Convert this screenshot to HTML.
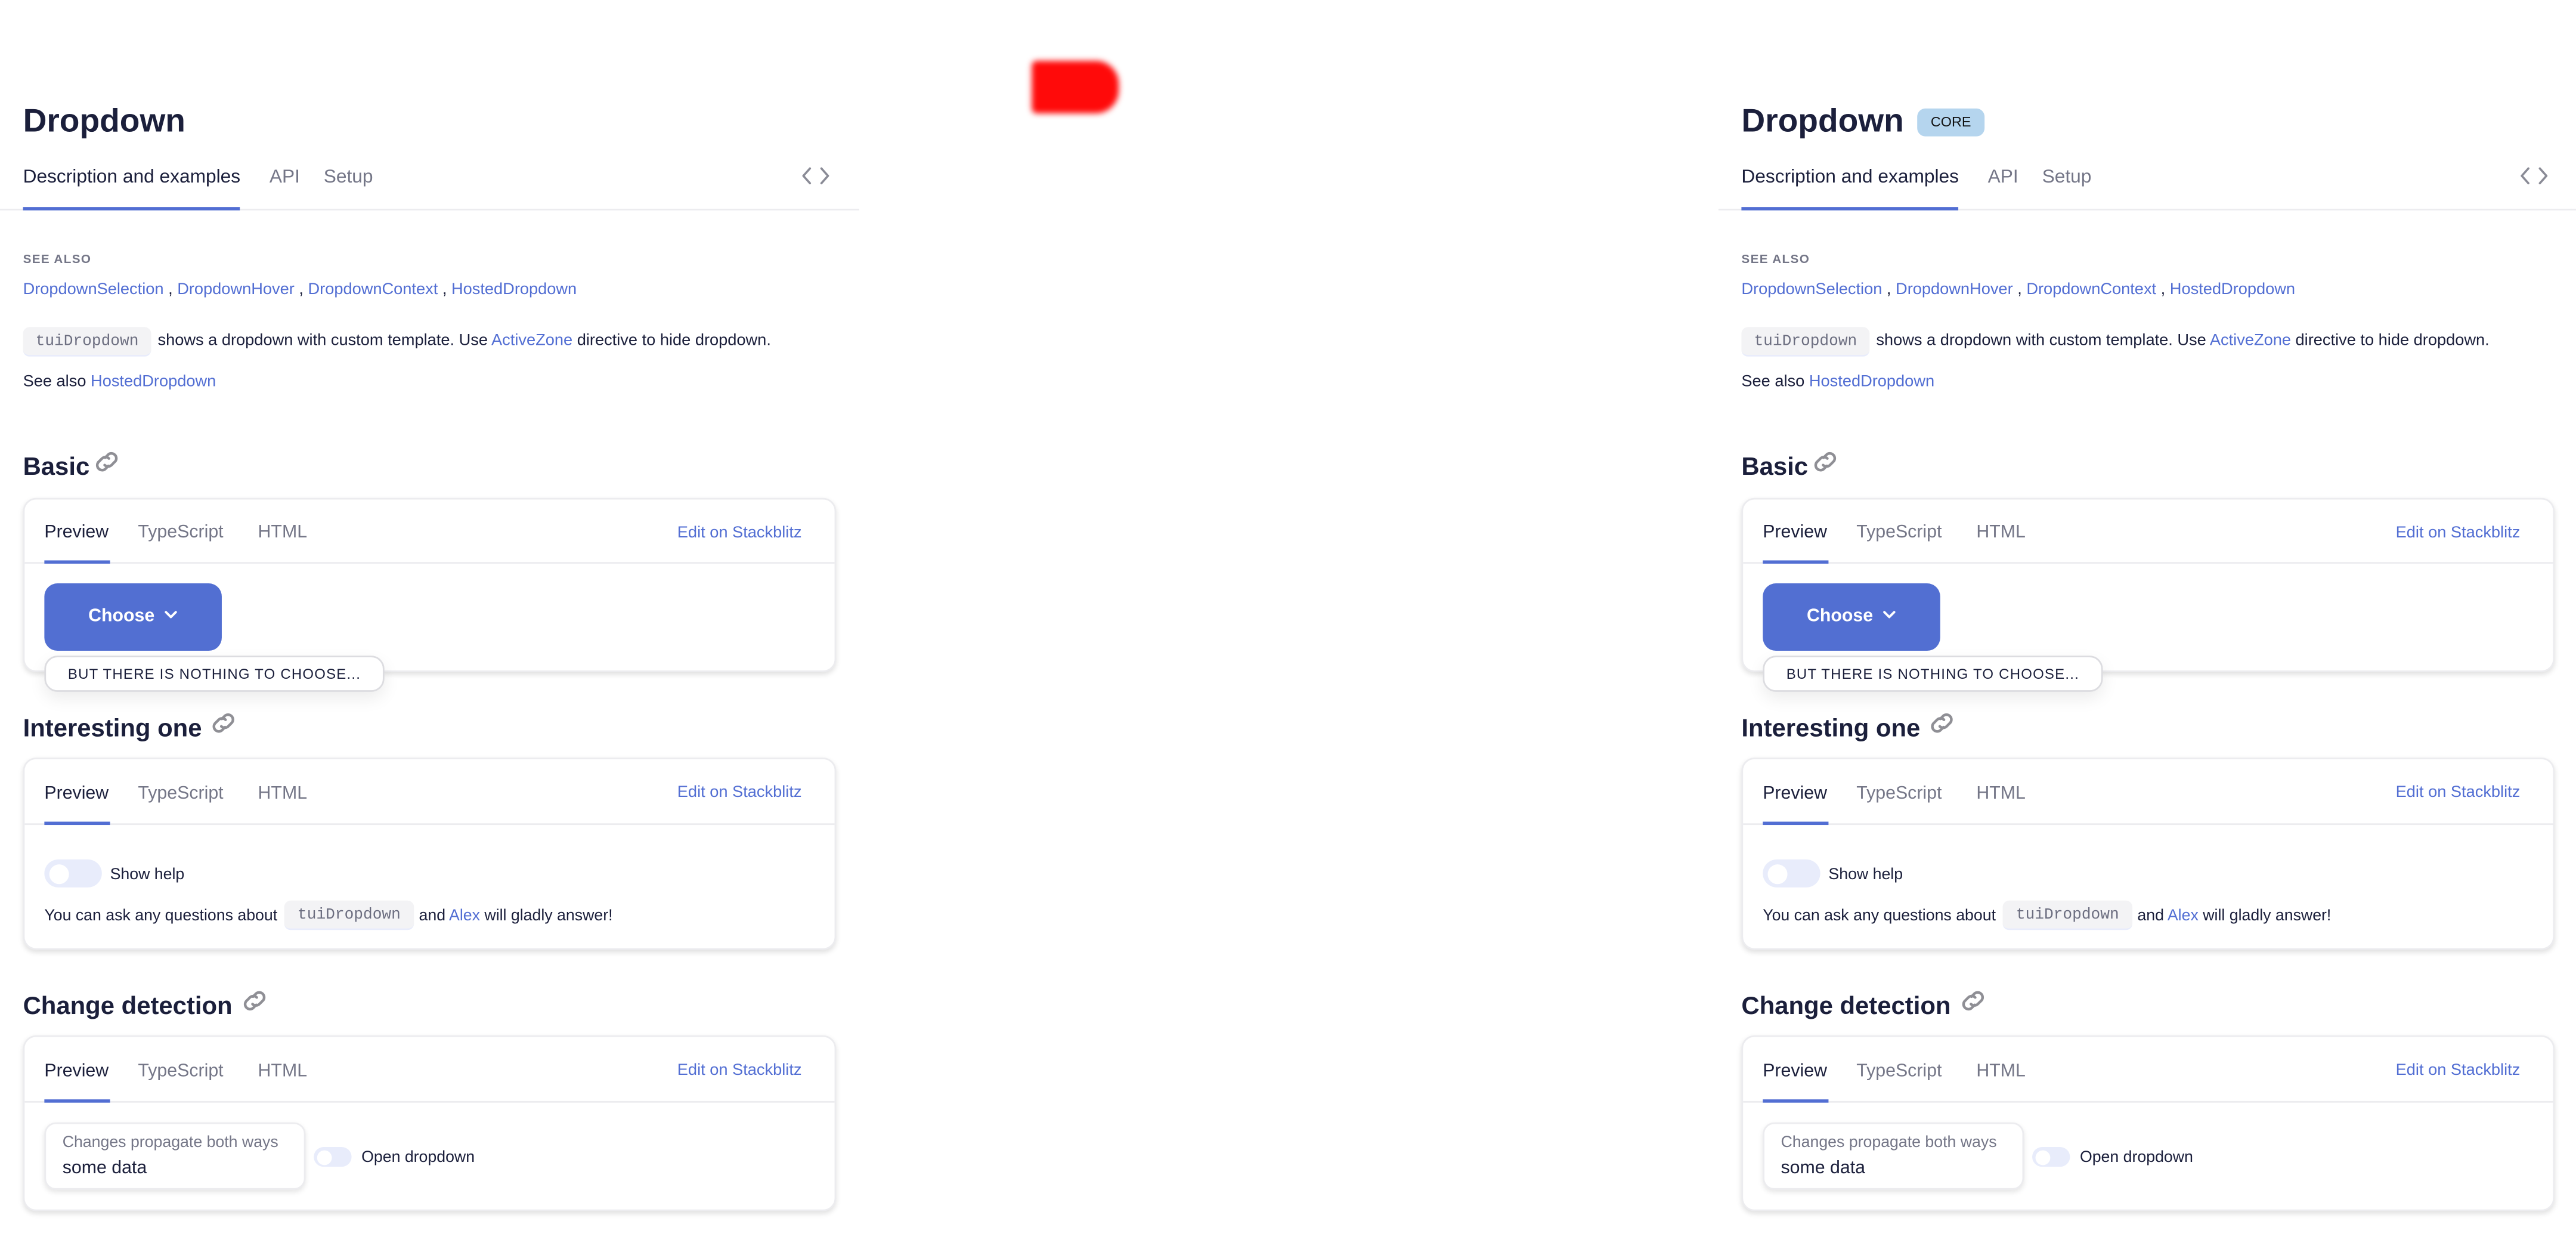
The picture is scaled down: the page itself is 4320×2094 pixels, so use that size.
<!DOCTYPE html>
<html><head><meta charset="utf-8"><style>
html,body{margin:0;padding:0;background:#fff;width:4320px;height:2092px;overflow:hidden}
#s{position:absolute;left:0;top:0;width:1568px;height:760px;transform:scale(2.7551);transform-origin:0 0;font-family:"Liberation Sans",sans-serif;color:#1b1f3b}
.p{position:absolute;top:0;width:523px;height:760px}
.a{position:absolute;white-space:nowrap}
.t{line-height:14px;margin-top:1px}
.b{font-size:9.9px;margin-top:2px}
.blue{color:#526ed3}
.gray{color:#747687}
.code{position:absolute;background:#f3f3f5;border-radius:4px;border-bottom:1px solid #e8ecfb;font-family:"Liberation Mono",monospace;font-size:9.5px;color:#6c6e80;line-height:17px;text-align:center}
.card{position:absolute;left:14px;width:493px;border:1px solid #ececef;border-radius:8px;background:#fff;box-shadow:0 1.5px 3px rgba(0,0,0,.12)}
.card .a{font-size:11px}
.edit{right:20px;left:auto!important}
.sep{position:absolute;left:0;right:0;height:1px;background:#ececef}
.ul{position:absolute;height:2px;background:#526ed3}
.h2{font-size:15.2px;font-weight:bold;margin-top:1px}
.tog{position:absolute;background:#e8ecfb;border-radius:10px}
.tog i{position:absolute;background:#fff;border-radius:50%}
</style></head><body><div id="s">

<div style="position:absolute;left:628px;top:37px;width:53px;height:32px;background:#ff0a0a;border-radius:3px 14px 14px 3px;filter:blur(1.8px)"></div>

<div class="p" style="left:0">
  <div class="a" style="left:14px;top:61px;font-size:20px;font-weight:bold;line-height:26px">Dropdown</div>
  <div class="a t" style="left:14px;top:100px;font-size:11.5px">Description and examples</div>
  <div class="a t gray" style="left:164px;top:100px;font-size:11.5px">API</div>
  <div class="a t gray" style="left:197px;top:100px;font-size:11.5px">Setup</div>
  <svg class="a" style="left:487px;top:101px" width="19" height="12" viewBox="0 0 19 12"><path d="M6 1.5L2 6l4 4.5M13 1.5L17 6l-4 4.5" fill="none" stroke="#8a8b96" stroke-width="1.3" stroke-linecap="round" stroke-linejoin="round"/></svg>
  <div class="a" style="left:0;top:127px;width:523px;height:1px;background:#ececef"></div>
  <div class="a" style="left:14px;top:125.5px;width:132px;height:2px;background:#526ed3"></div>

  <div class="a gray" style="left:14px;top:153px;font-size:7.5px;font-weight:bold;letter-spacing:.5px;line-height:9px">SEE ALSO</div>
  <div class="a t b" style="left:14px;top:168px"><span class="blue">DropdownSelection</span> , <span class="blue">DropdownHover</span> , <span class="blue">DropdownContext</span> , <span class="blue">HostedDropdown</span></div>
  <div class="code" style="left:14px;top:199px;width:78px">tuiDropdown</div>
  <div class="a t b" style="left:96px;top:199px">shows a dropdown with custom template. Use <span class="blue">ActiveZone</span> directive to hide dropdown.</div>
  <div class="a t b" style="left:14px;top:224px">See also <span class="blue">HostedDropdown</span></div>

  <div class="a h2" style="left:14px;top:275px;line-height:18px">Basic</div>
  <svg class="a" style="left:56px;top:272px" width="18" height="18" viewBox="0 0 18 18"><g fill="none" stroke="#8f8f95" stroke-width="1.6" stroke-linecap="round"><path d="M8 6.5l2-2a3 3 0 0 1 4.2 4.2l-2.3 2.3a3 3 0 0 1-4.2 0"/><path d="M10 11.5l-2 2a3 3 0 0 1-4.2-4.2l2.3-2.3a3 3 0 0 1 4.2 0"/></g></svg>

  <div class="card" style="top:303px;height:104px">
    <div class="a t" style="left:12px;top:12px">Preview</div>
    <div class="a t gray" style="left:69px;top:12px">TypeScript</div>
    <div class="a t gray" style="left:142px;top:12px">HTML</div>
    <div class="a t blue edit" style="top:13px;font-size:9.9px!important">Edit on Stackblitz</div>
    <div class="sep" style="top:38px"></div>
    <div class="ul" style="left:12px;top:37px;width:40px"></div>
    <div class="a" style="left:12px;top:51px;width:108px;height:41px;background:#526fd2;border-radius:8px;color:#fff;font-weight:bold;font-size:11px;line-height:41px;text-align:center">Choose&nbsp;&nbsp;<svg width="8" height="6" viewBox="0 0 8 6" style="vertical-align:1px"><path d="M1 1.5l3 3 3-3" fill="none" stroke="#fff" stroke-width="1.4" stroke-linecap="round" stroke-linejoin="round"/></svg></div>
  </div>
  <div class="a" style="left:27px;top:399px;width:205px;height:20px;border:1px solid #dcdce0;border-radius:8px;background:#fff;box-shadow:0 4px 10px rgba(0,0,0,.08);font-size:8.7px;letter-spacing:.45px;line-height:20px;text-align:center">BUT THERE IS NOTHING TO CHOOSE...</div>

  <div class="a h2" style="left:14px;top:434px;line-height:18px">Interesting one</div>
  <svg class="a" style="left:127px;top:431px" width="18" height="18" viewBox="0 0 18 18"><g fill="none" stroke="#8f8f95" stroke-width="1.6" stroke-linecap="round"><path d="M8 6.5l2-2a3 3 0 0 1 4.2 4.2l-2.3 2.3a3 3 0 0 1-4.2 0"/><path d="M10 11.5l-2 2a3 3 0 0 1-4.2-4.2l2.3-2.3a3 3 0 0 1 4.2 0"/></g></svg>

  <div class="card" style="top:461px;height:115px">
    <div class="a t" style="left:12px;top:13px">Preview</div>
    <div class="a t gray" style="left:69px;top:13px">TypeScript</div>
    <div class="a t gray" style="left:142px;top:13px">HTML</div>
    <div class="a t blue edit" style="top:13px;font-size:9.9px!important">Edit on Stackblitz</div>
    <div class="sep" style="top:39px"></div>
    <div class="ul" style="left:12px;top:38px;width:40px"></div>
    <div class="tog" style="left:12px;top:61px;width:35px;height:17px"><i style="left:2.5px;top:2.5px;width:12px;height:12px"></i></div>
    <div class="a t" style="left:52px;top:63px;font-size:9.7px!important">Show help</div>
    <div class="code" style="left:158px;top:86px;width:79px">tuiDropdown</div>
    <div class="a t" style="left:12px;top:88px;font-size:9.7px!important">You can ask any questions about</div>
    <div class="a t" style="left:240px;top:88px;font-size:9.7px!important">and <span class="blue">Alex</span> will gladly answer!</div>
  </div>

  <div class="a h2" style="left:14px;top:603px;line-height:18px">Change detection</div>
  <svg class="a" style="left:146px;top:600px" width="18" height="18" viewBox="0 0 18 18"><g fill="none" stroke="#8f8f95" stroke-width="1.6" stroke-linecap="round"><path d="M8 6.5l2-2a3 3 0 0 1 4.2 4.2l-2.3 2.3a3 3 0 0 1-4.2 0"/><path d="M10 11.5l-2 2a3 3 0 0 1-4.2-4.2l2.3-2.3a3 3 0 0 1 4.2 0"/></g></svg>

  <div class="card" style="top:630px;height:105px">
    <div class="a t" style="left:12px;top:13px">Preview</div>
    <div class="a t gray" style="left:69px;top:13px">TypeScript</div>
    <div class="a t gray" style="left:142px;top:13px">HTML</div>
    <div class="a t blue edit" style="top:13px;font-size:9.9px!important">Edit on Stackblitz</div>
    <div class="sep" style="top:39px"></div>
    <div class="ul" style="left:12px;top:38px;width:40px"></div>
    <div class="a" style="left:12px;top:52px;width:157px;height:39px;border:1px solid #ececef;border-radius:7px;background:#fff;box-shadow:0 1.5px 3px rgba(0,0,0,.1)"></div>
    <div class="a gray" style="left:23px;top:59px;font-size:9.7px!important;line-height:12px">Changes propagate both ways</div>
    <div class="a" style="left:23px;top:73px;font-size:11px;line-height:14px">some data</div>
    <div class="tog" style="left:176px;top:67px;width:23px;height:12px"><i style="left:1.5px;top:1.5px;width:9px;height:9px"></i></div>
    <div class="a t" style="left:205px;top:66px;font-size:9.7px!important">Open dropdown</div>
  </div>
</div>

<div class="p" style="left:1046px">
  <div class="a" style="left:14px;top:61px;font-size:20px;font-weight:bold;line-height:26px">Dropdown</div>
  <div class="a" style="left:121px;top:66px;width:41px;height:17px;background:#b5d5ee;border-radius:5px;font-size:8.5px;line-height:17px;text-align:center;color:#111">CORE</div>
  <div class="a t" style="left:14px;top:100px;font-size:11.5px">Description and examples</div>
  <div class="a t gray" style="left:164px;top:100px;font-size:11.5px">API</div>
  <div class="a t gray" style="left:197px;top:100px;font-size:11.5px">Setup</div>
  <svg class="a" style="left:487px;top:101px" width="19" height="12" viewBox="0 0 19 12"><path d="M6 1.5L2 6l4 4.5M13 1.5L17 6l-4 4.5" fill="none" stroke="#8a8b96" stroke-width="1.3" stroke-linecap="round" stroke-linejoin="round"/></svg>
  <div class="a" style="left:0;top:127px;width:523px;height:1px;background:#ececef"></div>
  <div class="a" style="left:14px;top:125.5px;width:132px;height:2px;background:#526ed3"></div>

  <div class="a gray" style="left:14px;top:153px;font-size:7.5px;font-weight:bold;letter-spacing:.5px;line-height:9px">SEE ALSO</div>
  <div class="a t b" style="left:14px;top:168px"><span class="blue">DropdownSelection</span> , <span class="blue">DropdownHover</span> , <span class="blue">DropdownContext</span> , <span class="blue">HostedDropdown</span></div>
  <div class="code" style="left:14px;top:199px;width:78px">tuiDropdown</div>
  <div class="a t b" style="left:96px;top:199px">shows a dropdown with custom template. Use <span class="blue">ActiveZone</span> directive to hide dropdown.</div>
  <div class="a t b" style="left:14px;top:224px">See also <span class="blue">HostedDropdown</span></div>

  <div class="a h2" style="left:14px;top:275px;line-height:18px">Basic</div>
  <svg class="a" style="left:56px;top:272px" width="18" height="18" viewBox="0 0 18 18"><g fill="none" stroke="#8f8f95" stroke-width="1.6" stroke-linecap="round"><path d="M8 6.5l2-2a3 3 0 0 1 4.2 4.2l-2.3 2.3a3 3 0 0 1-4.2 0"/><path d="M10 11.5l-2 2a3 3 0 0 1-4.2-4.2l2.3-2.3a3 3 0 0 1 4.2 0"/></g></svg>

  <div class="card" style="top:303px;height:104px">
    <div class="a t" style="left:12px;top:12px">Preview</div>
    <div class="a t gray" style="left:69px;top:12px">TypeScript</div>
    <div class="a t gray" style="left:142px;top:12px">HTML</div>
    <div class="a t blue edit" style="top:13px;font-size:9.9px!important">Edit on Stackblitz</div>
    <div class="sep" style="top:38px"></div>
    <div class="ul" style="left:12px;top:37px;width:40px"></div>
    <div class="a" style="left:12px;top:51px;width:108px;height:41px;background:#526fd2;border-radius:8px;color:#fff;font-weight:bold;font-size:11px;line-height:41px;text-align:center">Choose&nbsp;&nbsp;<svg width="8" height="6" viewBox="0 0 8 6" style="vertical-align:1px"><path d="M1 1.5l3 3 3-3" fill="none" stroke="#fff" stroke-width="1.4" stroke-linecap="round" stroke-linejoin="round"/></svg></div>
  </div>
  <div class="a" style="left:27px;top:399px;width:205px;height:20px;border:1px solid #dcdce0;border-radius:8px;background:#fff;box-shadow:0 4px 10px rgba(0,0,0,.08);font-size:8.7px;letter-spacing:.45px;line-height:20px;text-align:center">BUT THERE IS NOTHING TO CHOOSE...</div>

  <div class="a h2" style="left:14px;top:434px;line-height:18px">Interesting one</div>
  <svg class="a" style="left:127px;top:431px" width="18" height="18" viewBox="0 0 18 18"><g fill="none" stroke="#8f8f95" stroke-width="1.6" stroke-linecap="round"><path d="M8 6.5l2-2a3 3 0 0 1 4.2 4.2l-2.3 2.3a3 3 0 0 1-4.2 0"/><path d="M10 11.5l-2 2a3 3 0 0 1-4.2-4.2l2.3-2.3a3 3 0 0 1 4.2 0"/></g></svg>

  <div class="card" style="top:461px;height:115px">
    <div class="a t" style="left:12px;top:13px">Preview</div>
    <div class="a t gray" style="left:69px;top:13px">TypeScript</div>
    <div class="a t gray" style="left:142px;top:13px">HTML</div>
    <div class="a t blue edit" style="top:13px;font-size:9.9px!important">Edit on Stackblitz</div>
    <div class="sep" style="top:39px"></div>
    <div class="ul" style="left:12px;top:38px;width:40px"></div>
    <div class="tog" style="left:12px;top:61px;width:35px;height:17px"><i style="left:2.5px;top:2.5px;width:12px;height:12px"></i></div>
    <div class="a t" style="left:52px;top:63px;font-size:9.7px!important">Show help</div>
    <div class="code" style="left:158px;top:86px;width:79px">tuiDropdown</div>
    <div class="a t" style="left:12px;top:88px;font-size:9.7px!important">You can ask any questions about</div>
    <div class="a t" style="left:240px;top:88px;font-size:9.7px!important">and <span class="blue">Alex</span> will gladly answer!</div>
  </div>

  <div class="a h2" style="left:14px;top:603px;line-height:18px">Change detection</div>
  <svg class="a" style="left:146px;top:600px" width="18" height="18" viewBox="0 0 18 18"><g fill="none" stroke="#8f8f95" stroke-width="1.6" stroke-linecap="round"><path d="M8 6.5l2-2a3 3 0 0 1 4.2 4.2l-2.3 2.3a3 3 0 0 1-4.2 0"/><path d="M10 11.5l-2 2a3 3 0 0 1-4.2-4.2l2.3-2.3a3 3 0 0 1 4.2 0"/></g></svg>

  <div class="card" style="top:630px;height:105px">
    <div class="a t" style="left:12px;top:13px">Preview</div>
    <div class="a t gray" style="left:69px;top:13px">TypeScript</div>
    <div class="a t gray" style="left:142px;top:13px">HTML</div>
    <div class="a t blue edit" style="top:13px;font-size:9.9px!important">Edit on Stackblitz</div>
    <div class="sep" style="top:39px"></div>
    <div class="ul" style="left:12px;top:38px;width:40px"></div>
    <div class="a" style="left:12px;top:52px;width:157px;height:39px;border:1px solid #ececef;border-radius:7px;background:#fff;box-shadow:0 1.5px 3px rgba(0,0,0,.1)"></div>
    <div class="a gray" style="left:23px;top:59px;font-size:9.7px!important;line-height:12px">Changes propagate both ways</div>
    <div class="a" style="left:23px;top:73px;font-size:11px;line-height:14px">some data</div>
    <div class="tog" style="left:176px;top:67px;width:23px;height:12px"><i style="left:1.5px;top:1.5px;width:9px;height:9px"></i></div>
    <div class="a t" style="left:205px;top:66px;font-size:9.7px!important">Open dropdown</div>
  </div>
</div>

</div></body></html>
